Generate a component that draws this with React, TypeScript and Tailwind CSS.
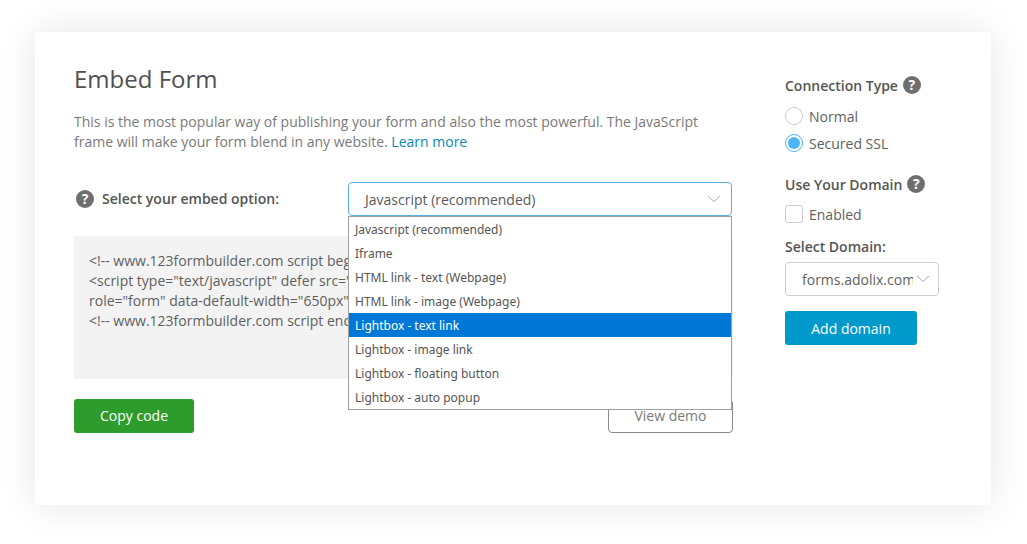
import { useState } from "react";

const embedOptions = [
  "Javascript (recommended)",
  "Iframe",
  "HTML link - text (Webpage)",
  "HTML link - image (Webpage)",
  "Lightbox - text link",
  "Lightbox - image link",
  "Lightbox - floating button",
  "Lightbox - auto popup",
];

const codeLines = [
  "<!-- www.123formbuilder.com script begins here -->",
  '<script type="text/javascript" defer src="//www.123formbuilder.com/embed/4.js" data-',
  'role="form" data-default-width="650px"></script>',
  "<!-- www.123formbuilder.com script ends here -->",
];

function HelpIcon() {
  return (
    <span className="flex h-[18px] w-[18px] shrink-0 items-center justify-center rounded-full bg-[#706f6f] text-[14px] leading-none font-bold text-white">
      ?
    </span>
  );
}

function Chevron() {
  return (
    <svg width="14" height="8" viewBox="0 0 14 8" fill="none" className="shrink-0">
      <path d="M1 1l6 5.5L13 1" stroke="#a9a9a9" strokeWidth="1" />
    </svg>
  );
}

function EmbedPanel() {
  const [selected] = useState(4);

  return (
    <div className="w-[659px] shrink-0">
      <h1 className="text-[24px] leading-[29px] text-[#505050]">Embed Form</h1>
      <p className="mt-[19px] text-[14px] leading-[20px] text-[#7a7a7a]">
        This is the most popular way of publishing your form and also the most powerful. The JavaScript
        frame will make your form blend in any website. <span className="text-[#0a87b8]">Learn more</span>
      </p>

      <div className="relative mt-[30px]">
        <div className="flex items-center">
          <div className="flex w-[274px] items-center gap-[8px] pb-[1px] pl-[2px]">
            <HelpIcon />
            <span className="pb-[1px] text-[14px] font-semibold text-[#555555]">Select your embed option:</span>
          </div>
          <div className="flex h-[34px] w-[384px] items-center justify-between rounded-[4px] border border-[#5aaee6] pr-[10px] pl-[16px] text-[14px] text-[#5a5a5a]">
            <span>Javascript (recommended)</span>
            <Chevron />
          </div>
        </div>

        <div className="mt-[20px] h-[143px] overflow-hidden bg-[#f3f3f3] px-[15px] pt-[15px] text-[14px] leading-[20px] whitespace-nowrap text-[#5f5f5f]">
          {codeLines.map((line) => (
            <div key={line}>{line}</div>
          ))}
        </div>

        <div className="mt-[20px] flex items-center justify-between">
          <button className="h-[34px] w-[120px] rounded-[3px] bg-[#2e9c2d] pb-[2px] text-[14px] text-white">
            Copy code
          </button>
          <button className="h-[34px] w-[125px] rounded-[4px] border border-[#8a8a8a] pb-[2px] text-[14px] text-[#7a7a7a]">
            View demo
          </button>
        </div>

        <ul className="absolute top-[34px] left-[274px] w-[384px] border border-[#a0a0a0] bg-white font-['Noto_Sans',sans-serif] text-[12px] text-[#555555]">
          {embedOptions.map((option, i) => (
            <li
              key={option}
              className={
                i === selected
                  ? "h-[24px] bg-[#0078d7] pl-[6px] leading-[25px] text-white"
                  : "h-[24px] pl-[6px] leading-[25px]"
              }
            >
              {option}
            </li>
          ))}
        </ul>
      </div>
    </div>
  );
}

function SettingsPanel() {
  return (
    <div className="ml-[52px] w-[154px] shrink-0 pt-[11px] text-[14px] text-[#5f5f5f]">
      <div className="flex h-[20px] items-center gap-[5px] font-semibold text-[#555555]">
        Connection Type <HelpIcon />
      </div>
      <div className="mt-[12px] flex h-[18px] items-center gap-[6px]">
        <span className="h-[18px] w-[18px] rounded-full border border-[#cccccc]" />
        Normal
      </div>
      <div className="mt-[9px] flex h-[18px] items-center gap-[6px]">
        <span className="flex h-[18px] w-[18px] items-center justify-center rounded-full border border-[#4db6f5]">
          <span className="h-[12px] w-[12px] rounded-full bg-[#4db6f5]" />
        </span>
        Secured SSL
      </div>
      <div className="mt-[22px] flex h-[20px] items-center gap-[5px] font-semibold text-[#555555]">
        Use Your Domain <HelpIcon />
      </div>
      <div className="mt-[11px] flex h-[18px] items-center gap-[6px]">
        <span className="h-[18px] w-[18px] rounded-[3px] border border-[#cccccc]" />
        Enabled
      </div>
      <div className="mt-[14px] h-[20px] leading-[20px] font-semibold text-[#555555]">Select Domain:</div>
      <div className="mt-[5px] flex h-[34px] items-center gap-[3px] rounded-[4px] border border-[#cfcfcf] pl-[16px]">
        <span className="w-[111px] overflow-hidden whitespace-nowrap">forms.adolix.com</span>
        <Chevron />
      </div>
      <button className="mt-[15px] h-[34px] w-[132px] rounded-[3px] bg-[#0099cc] text-white">Add domain</button>
    </div>
  );
}

export default function App() {
  return (
    <div className="h-[544px] bg-white px-[35px] pt-[32px] font-['Open_Sans',sans-serif]">
      <div className="flex h-[473px] w-[956px] bg-white pt-[32px] pl-[39px] shadow-[0_0_35px_rgba(0,0,0,0.1)]">
        <EmbedPanel />
        <SettingsPanel />
      </div>
    </div>
  );
}
